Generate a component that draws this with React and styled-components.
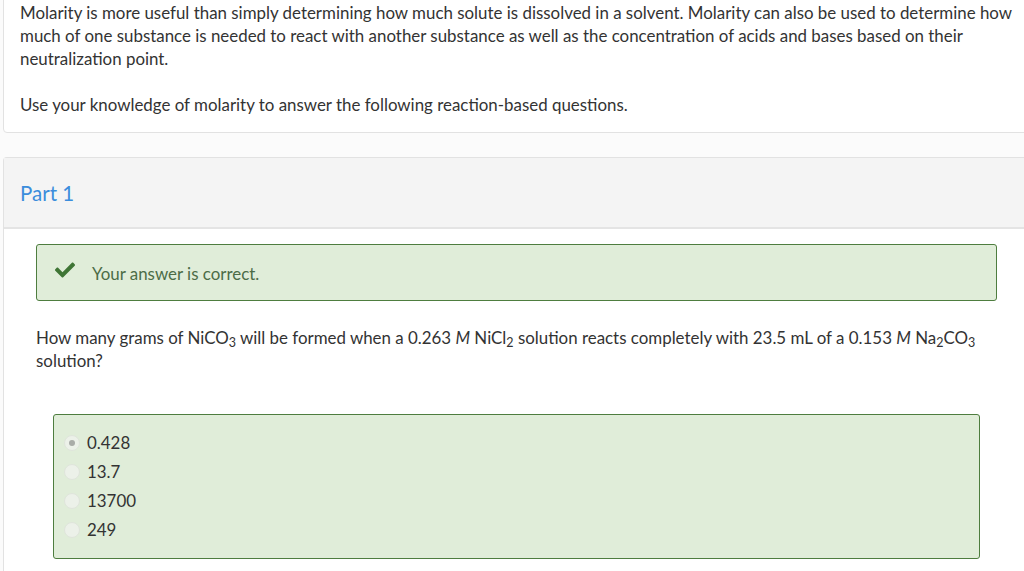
import React from "react";
import styled, { createGlobalStyle } from "styled-components";

const GlobalStyle = createGlobalStyle`
  html, body {
    margin: 0;
    padding: 0;
    background: #fbfbfb;
    overflow: hidden;
  }
  body {
    font-family: Lato, "Open Sans", sans-serif;
    color: #333;
    font-size: 16.9px;
    line-height: 23px;
  }
`;

const Page = styled.div`
  padding-left: 3px;
  margin-right: -12px;
  display: flex;
  flex-direction: column;
  gap: 24px;
`;

const IntroCard = styled.div`
  margin-top: -12px;
  background: #fff;
  border: 1px solid #e2e2e2;
  border-radius: 4px;
  padding: 12px 16px 16px;
`;

const Para = styled.p`
  margin: 0 0 23px;
  &:last-child {
    margin-bottom: 0;
  }
`;

const PartPanel = styled.div`
  background: #fff;
  border: 1px solid #e2e2e2;
  border-bottom: none;
  border-radius: 4px 4px 0 0;
`;

const PartHeader = styled.div`
  background: #f4f4f4;
  border-bottom: 2px solid #e4e4e4;
  height: 68px;
  padding: 0 16px;
  display: flex;
  align-items: center;
  color: #3b8ddc;
  font-size: 20.5px;
  padding-top: 1px;
`;

const PartBody = styled.div`
  padding: 15px 32px 20px;
`;

const Alert = styled.div`
  display: flex;
  align-items: center;
  gap: 17px;
  height: 55px;
  padding: 0 18px;
  background: #e0edd9;
  border: 1px solid #4e7d3f;
  border-radius: 3px;
  color: #4c6c47;
  box-sizing: content-box;
  width: 923px;
`;

const CheckIcon = styled.svg`
  width: 20px;
  height: 20px;
  fill: #3f7535;
  margin-top: -5px;
`;

const AlertText = styled.span`
  padding-top: 1px;
`;

const Question = styled.p`
  margin: 25px 0 42px;
  max-width: 950px;
`;

const Sub = styled.sub`
  font-size: 12.5px;
  line-height: 0;
  vertical-align: -3px;
`;

const Options = styled.div`
  margin-left: 17px;
  width: 905px;
  background: #e0edd9;
  border: 1px solid #4e7d3f;
  border-radius: 3px;
  padding: 13px 10px 14px;
  display: flex;
  flex-direction: column;
`;

const Option = styled.label`
  display: flex;
  align-items: center;
  gap: 7px;
  height: 29px;
`;

const Radio = styled.span`
  width: 14px;
  height: 14px;
  border-radius: 50%;
  background: #ecf1e9;
  border: 1px solid #dfe5db;
  display: flex;
  align-items: center;
  justify-content: center;
  &::after {
    content: "";
    width: 6px;
    height: 6px;
    border-radius: 50%;
    background: ${(p) => (p.checked ? "#a9aca8" : "transparent")};
  }
`;

const answers = ["0.428", "13.7", "13700", "249"];

export default function App() {
  return (
    <>
      <GlobalStyle />
      <Page>
        <IntroCard>
          <Para>
            Molarity is more useful than simply determining how much solute is dissolved in a
            solvent. Molarity can also be used to determine how much of one substance is needed
            to react with another substance as well as the concentration of acids and bases
            based on their neutralization point.
          </Para>
          <Para>Use your knowledge of molarity to answer the following reaction-based questions.</Para>
        </IntroCard>
        <PartPanel>
          <PartHeader>Part 1</PartHeader>
          <PartBody>
            <Alert>
              <CheckIcon viewBox="0 0 512 512">
                <path d="M173.898 439.404l-166.4-166.4c-9.997-9.997-9.997-26.206 0-36.204l36.203-36.204c9.997-9.998 26.207-9.998 36.204 0L192 312.69 432.095 72.596c9.997-9.997 26.207-9.997 36.204 0l36.203 36.204c9.997 9.997 9.997 26.206 0 36.204l-294.4 294.401c-9.998 9.997-26.207 9.997-36.204-.001z" />
              </CheckIcon>
              <AlertText>Your answer is correct.</AlertText>
            </Alert>
            <Question>
              How many grams of NiCO<Sub>3</Sub> will be formed when a 0.263 <i>M</i> NiCl
              <Sub>2</Sub> solution reacts completely with 23.5 mL of a 0.153 <i>M</i> Na
              <Sub>2</Sub>CO<Sub>3</Sub> solution?
            </Question>
            <Options>
              {answers.map((a, i) => (
                <Option key={a}>
                  <Radio checked={i === 0} />
                  {a}
                </Option>
              ))}
            </Options>
          </PartBody>
        </PartPanel>
      </Page>
    </>
  );
}
